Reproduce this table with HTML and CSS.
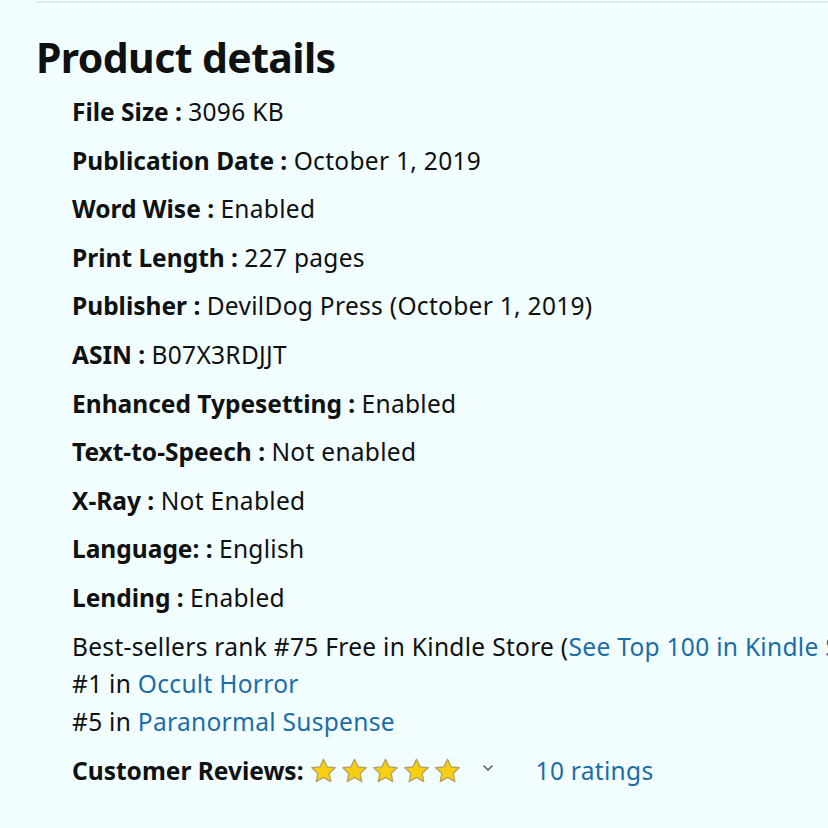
FILE: index.html
```html
<!DOCTYPE html>
<html lang="en">
<head>
<meta charset="utf-8">
<title>Product details</title>
<link rel="stylesheet" href="styles.css">
</head>
<body>
<div class="page">
  <div class="topline"></div>
  <h1 class="title">Product details</h1>
  <ul class="details">
    <li class="row"><span class="label">File Size : </span>3096 KB</li>
    <li class="row"><span class="label">Publication Date : </span>October 1, 2019</li>
    <li class="row"><span class="label">Word Wise : </span>Enabled</li>
    <li class="row"><span class="label">Print Length : </span>227 pages</li>
    <li class="row"><span class="label">Publisher : </span>DevilDog Press (October 1, 2019)</li>
    <li class="row"><span class="label">ASIN : </span>B07X3RDJJT</li>
    <li class="row"><span class="label">Enhanced Typesetting : </span>Enabled</li>
    <li class="row"><span class="label">Text-to-Speech : </span>Not enabled</li>
    <li class="row"><span class="label">X-Ray : </span>Not Enabled</li>
    <li class="row"><span class="label">Language: : </span>English</li>
    <li class="row"><span class="label">Lending : </span>Enabled</li>
    <li class="rank">
      <div>Best-sellers rank #75 Free in Kindle Store (<a class="link" href="#">See Top 100 in Kindle Store</a>)</div>
      <div>#1 in <a class="link" href="#">Occult Horror</a></div>
      <div>#5 in <a class="link" href="#">Paranormal Suspense</a></div>
    </li>
    <li class="row reviews">
      <span class="label">Customer Reviews:</span>
      <span class="stars">
        <svg class="star" viewBox="0 0 26 25"><path d="M13 1.2l3.4 7.3 7.9 0.9-5.9 5.4 1.6 7.9L13 18.7l-7 4l1.6-7.9-5.9-5.4 7.9-0.9z"/></svg>
        <svg class="star" viewBox="0 0 26 25"><path d="M13 1.2l3.4 7.3 7.9 0.9-5.9 5.4 1.6 7.9L13 18.7l-7 4l1.6-7.9-5.9-5.4 7.9-0.9z"/></svg>
        <svg class="star" viewBox="0 0 26 25"><path d="M13 1.2l3.4 7.3 7.9 0.9-5.9 5.4 1.6 7.9L13 18.7l-7 4l1.6-7.9-5.9-5.4 7.9-0.9z"/></svg>
        <svg class="star" viewBox="0 0 26 25"><path d="M13 1.2l3.4 7.3 7.9 0.9-5.9 5.4 1.6 7.9L13 18.7l-7 4l1.6-7.9-5.9-5.4 7.9-0.9z"/></svg>
        <svg class="star" viewBox="0 0 26 25"><path d="M13 1.2l3.4 7.3 7.9 0.9-5.9 5.4 1.6 7.9L13 18.7l-7 4l1.6-7.9-5.9-5.4 7.9-0.9z"/></svg>
      </span>
      <svg class="chev" viewBox="0 0 12 8"><path d="M1.5 1.5L6 6l4.5-4.5"/></svg>
      <a class="link ratings" href="#">10 ratings</a>
    </li>
  </ul>
</div>
</body>
</html>
```
FILE: styles.css
```css
html, body {
  margin: 0;
  padding: 0;
  background: #f2fdff;
}
.page {
  width: 828px;
  height: 828px;
  overflow: hidden;
  font-family: "Noto Sans", "Open Sans", sans-serif;
  color: #0f1111;
}
.topline {
  margin: 1px 0 0 36px;
  height: 2px;
  background: #e1ecf0;
}
.title {
  margin: 29px 0 0 36px;
  font-size: 41px;
  line-height: 50px;
  font-weight: 700;
  letter-spacing: -0.6px;
}
.details {
  list-style: none;
  margin: 6px 0 0 0;
  padding: 0 0 0 72px;
  font-size: 24.5px;
  letter-spacing: 0.3px;
  white-space: nowrap;
}
.row {
  line-height: 48.6px;
}
.label {
  font-weight: 700;
  letter-spacing: 0;
}
.rank {
  margin-top: 5px;
  line-height: 37.5px;
}
.rank-first {
  letter-spacing: 0.3px;
}
.link {
  color: #1a6da6;
  text-decoration: none;
}
.reviews {
  display: flex;
  align-items: center;
  margin-top: 7px;
}
.stars {
  display: flex;
  gap: 4px;
  margin-left: 6px;
}
.star {
  width: 27px;
  height: 26px;
}
.star path {
  fill: #f6cf10;
  stroke: #b8a060;
  stroke-width: 1.3;
  stroke-linejoin: round;
}
.chev {
  width: 12px;
  height: 8px;
  margin-left: 21px;
  margin-top: -6px;
}
.chev path {
  fill: none;
  stroke: #55646d;
  stroke-width: 1.6;
}
.ratings {
  margin-left: 42px;
}
```
